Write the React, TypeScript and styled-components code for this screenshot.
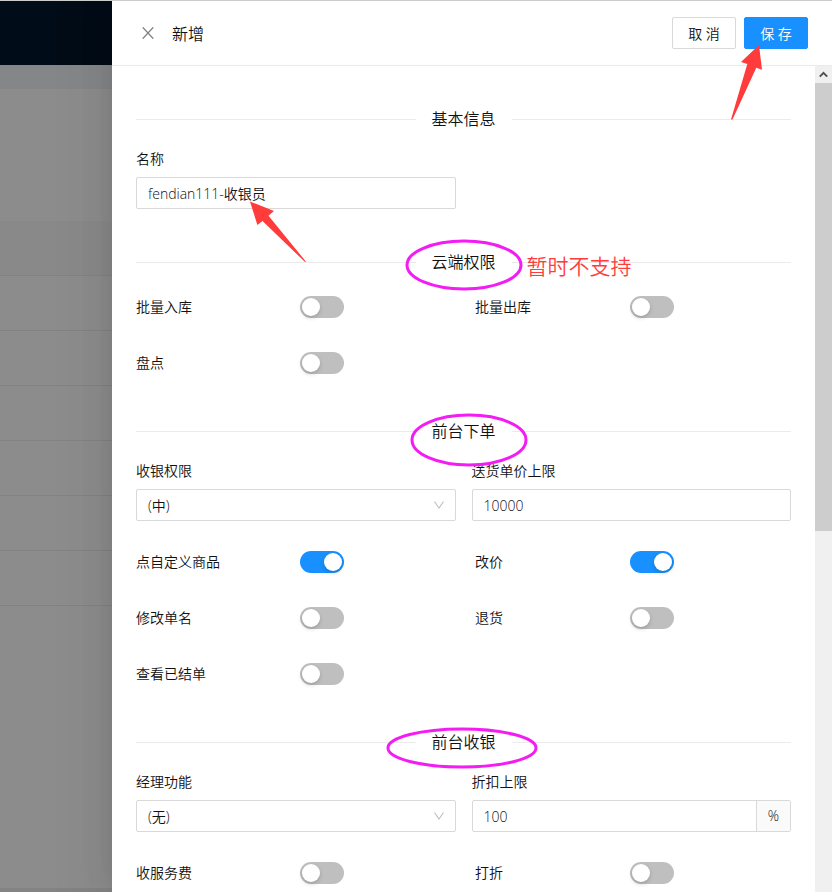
import React, { useId } from "react";
import styled, { createGlobalStyle } from "styled-components";

const GlobalStyle = createGlobalStyle`
  *, *::before, *::after { box-sizing: border-box; }
  body { margin: 0; }
  body, button, input, select {
    font-family: "Open Sans", "Noto Sans CJK SC", sans-serif;
    font-size: 14px;
    font-weight: 350;
    line-height: 22px;
    color: #111111;
  }
`;

const Page = styled.div`
  display: flex;
  height: 100vh;
  border-top: 1px solid #cccccc;
  background: #8c8c8c;
  overflow: hidden;
`;

const Backdrop = styled.div`
  flex: 1;
  display: flex;
  flex-direction: column;
  min-width: 0;
`;

const NavBar = styled.div`
  height: 64px;
  background: #000c17;
`;

const TabStrip = styled.div`
  height: 24px;
  background: #848688;
`;

const FilterArea = styled.div`
  height: 132px;
`;

const TableRow = styled.div<{ $head?: boolean }>`
  height: 55px;
  border-bottom: 1px solid #828282;
  background: ${(p) => (p.$head ? "#898989" : "transparent")};
`;

const PageFoot = styled.div`
  height: 4px;
  margin-top: auto;
  background: #838383;
`;

const Drawer = styled.section`
  display: flex;
  flex-direction: column;
  width: 720px;
  max-width: 100%;
  background: #ffffff;
  box-shadow:
    -6px 0 16px -8px rgba(0, 0, 0, 0.08),
    -9px 0 28px 0 rgba(0, 0, 0, 0.05),
    -12px 0 48px 16px rgba(0, 0, 0, 0.03);
`;

const Header = styled.header`
  display: flex;
  align-items: center;
  height: 65px;
  flex: none;
  padding: 0 24px;
  border-bottom: 1px solid #ebebeb;
`;

const CloseButton = styled.button`
  display: flex;
  align-items: center;
  justify-content: center;
  width: 24px;
  height: 24px;
  margin-right: 12px;
  padding: 0;
  border: 0;
  background: none;
  cursor: pointer;
`;

const Title = styled.h1`
  flex: 1;
  margin: 0;
  padding-top: 2px;
  font-size: 16px;
  font-weight: 350;
  line-height: 24px;
`;

const Actions = styled.div`
  position: relative;
  display: flex;
  gap: 8px;
`;

const Button = styled.button<{ $primary?: boolean }>`
  width: 64px;
  height: 32px;
  padding: 2px 0 0;
  border: 1px solid ${(p) => (p.$primary ? "#1890ff" : "#d9d9d9")};
  border-radius: 2px;
  background: ${(p) => (p.$primary ? "#1890ff" : "#ffffff")};
  color: ${(p) => (p.$primary ? "#ffffff" : "#111111")};
  cursor: pointer;
`;

const Main = styled.div`
  display: flex;
  flex: 1;
  min-height: 0;
`;

const Body = styled.form`
  flex: 1;
  min-width: 0;
  padding: 41px 24px 24px;
  overflow-y: auto;
  scrollbar-width: none;
`;

const ScrollTrack = styled.div`
  width: 17px;
  background: #f0f0f0;
`;

const ScrollUp = styled.div`
  display: flex;
  align-items: center;
  justify-content: center;
  height: 17px;
`;

const ScrollThumb = styled.div`
  height: 448px;
  background: #cdcdcd;
`;

const Section = styled.section`
  margin-bottom: 28px;
`;

const Divider = styled.div`
  display: flex;
  align-items: center;
  gap: 16px;

  &::before,
  &::after {
    content: "";
    flex: 1;
    height: 1px;
    background: #ebebeb;
  }
`;

const DividerTitle = styled.h2`
  position: relative;
  margin: 0;
  font-size: 16px;
  font-weight: 350;
  line-height: 24px;
`;

const Ring = styled.svg<{ $x: number; $y: number }>`
  position: absolute;
  left: ${(p) => p.$x}px;
  top: ${(p) => p.$y}px;
  z-index: 1;
  overflow: visible;
  pointer-events: none;
`;

const Remark = styled.span`
  position: absolute;
  left: 95px;
  top: 0;
  color: #ff3b3b;
  font-size: 21px;
  line-height: 32px;
  white-space: nowrap;
`;

const Arrow = styled.svg<{ $x: number; $y: number }>`
  position: absolute;
  left: ${(p) => p.$x}px;
  top: ${(p) => p.$y}px;
  z-index: 2;
  pointer-events: none;
`;

const Fields = styled.div`
  display: grid;
  grid-template-columns: 1fr 1fr;
  column-gap: 16px;
  padding: 17px 0 13px;
`;

const Field = styled.div`
  display: flex;
  flex-direction: column;
  gap: 7px;
  min-width: 0;
`;

const FieldLabel = styled.label`
  line-height: 22px;
`;

const Control = styled.div`
  position: relative;
  display: flex;
  height: 32px;
  border: 1px solid #d9d9d9;
  border-radius: 2px;
`;

const TextInput = styled.input`
  flex: 1;
  min-width: 0;
  padding: 2px 11px 0;
  border: 0;
  outline: 0;
  background: none;
`;

const Select = styled.select`
  flex: 1;
  padding: 2px 11px 0;
  border: 0;
  outline: 0;
  background: none;
  appearance: none;
`;

const Chevron = styled.svg`
  position: absolute;
  right: 11px;
  top: 11px;
  pointer-events: none;
`;

const Addon = styled.span`
  display: flex;
  align-items: center;
  justify-content: center;
  width: 34px;
  border-left: 1px solid #d9d9d9;
  background: #fafafa;
`;

const Toggles = styled.div<{ $spaced?: boolean }>`
  display: grid;
  grid-template-columns: 164fr 175fr 155fr 161fr;
  grid-auto-rows: 56px;
  align-items: center;
  margin-top: ${(p) => (p.$spaced ? "5px" : "0")};
`;

const Switch = styled.input`
  appearance: none;
  position: relative;
  width: 44px;
  height: 22px;
  margin: 0;
  border-radius: 11px;
  background: #bfbfbf;
  cursor: pointer;

  &::before {
    content: "";
    position: absolute;
    top: 2px;
    left: 2px;
    width: 18px;
    height: 18px;
    border-radius: 9px;
    background: #ffffff;
    box-shadow: 0 2px 4px rgba(0, 35, 11, 0.2);
  }

  &:checked {
    background: #1890ff;
  }

  &:checked::before {
    left: 24px;
  }
`;

type RingShape = { x: number; y: number; w: number; h: number };

function SectionDivider({ title, ring, remark }: { title: string; ring?: RingShape; remark?: string }) {
  return (
    <Divider>
      <DividerTitle>
        {title}
        {ring && (
          <Ring $x={ring.x} $y={ring.y} width={ring.w} height={ring.h} aria-hidden="true">
            <ellipse
              cx={ring.w / 2}
              cy={ring.h / 2}
              rx={ring.w / 2 - 2}
              ry={ring.h / 2 - 2}
              fill="none"
              stroke="#f31cf3"
              strokeWidth="3"
            />
          </Ring>
        )}
        {remark && <Remark>{remark}</Remark>}
      </DividerTitle>
    </Divider>
  );
}

function TextField({ label, value, suffix, children }: {
  label: string; value: string; suffix?: string; children?: React.ReactNode;
}) {
  const id = useId();
  return (
    <Field>
      <FieldLabel htmlFor={id}>{label}</FieldLabel>
      <Control>
        <TextInput id={id} type="text" defaultValue={value} />
        {suffix && <Addon>{suffix}</Addon>}
        {children}
      </Control>
    </Field>
  );
}

function SelectField({ label, value }: { label: string; value: string }) {
  const id = useId();
  return (
    <Field>
      <FieldLabel htmlFor={id}>{label}</FieldLabel>
      <Control>
        <Select id={id} defaultValue={value}>
          <option>{value}</option>
        </Select>
        <Chevron width="10" height="8" viewBox="0 0 10 8" aria-hidden="true">
          <path d="M0.5 0.5 L5 7 L9.5 0.5" fill="none" stroke="#bfbfbf" strokeWidth="1.1" />
        </Chevron>
      </Control>
    </Field>
  );
}

function Toggle({ label, on = false }: { label: string; on?: boolean }) {
  const id = useId();
  return (
    <>
      <label htmlFor={id}>{label}</label>
      <Switch id={id} type="checkbox" role="switch" defaultChecked={on} />
    </>
  );
}

const tableRows = [1, 2, 3, 4, 5, 6];

export default function App() {
  return (
    <>
      <GlobalStyle />
      <Page>
        <Backdrop>
          <NavBar />
          <TabStrip />
          <FilterArea />
          <TableRow $head />
          {tableRows.map((n) => (
            <TableRow key={n} />
          ))}
          <PageFoot />
        </Backdrop>
        <Drawer aria-label="新增">
          <Header>
            <CloseButton type="button" aria-label="关闭">
              <svg width="12" height="12" viewBox="0 0 12 12" aria-hidden="true">
                <path d="M0.7 0.3 L11.3 11.7 M11.3 0.3 L0.7 11.7" stroke="#808080" strokeWidth="1.3" />
              </svg>
            </CloseButton>
            <Title>新增</Title>
            <Actions>
              <Button type="button">取 消</Button>
              <Button type="submit" form="role-form" $primary>保 存</Button>
              <Arrow $x={59} $y={28} width="32" height="76" viewBox="0 0 32 76" aria-hidden="true">
                <path d="M28 0 L10 17 L16.3 19 L0 74.5 L1.5 74.5 L25.3 22.7 L31 24.7 Z" fill="#ff3b3b" />
              </Arrow>
            </Actions>
          </Header>
          <Main>
            <Body id="role-form" onSubmit={(e) => e.preventDefault()}>
              <Section>
                <SectionDivider title="基本信息" />
                <Fields>
                  <TextField label="名称" value="fendian111-收银员">
                    <Arrow $x={113} $y={23} width="57" height="62" viewBox="0 0 57 62" aria-hidden="true">
                      <path d="M0 0.5 L24 10 L18.5 14.7 L56 60.7 L55 61 L12.5 20 L7.4 24 Z" fill="#ff3b3b" />
                    </Arrow>
                  </TextField>
                </Fields>
              </Section>
              <Section>
                <SectionDivider title="云端权限" ring={{ x: -27, y: -11, w: 118, h: 52 }} remark="暂时不支持" />
                <Toggles $spaced>
                  <Toggle label="批量入库" />
                  <Toggle label="批量出库" />
                  <Toggle label="盘点" />
                </Toggles>
              </Section>
              <Section>
                <SectionDivider title="前台下单" ring={{ x: -22, y: -6, w: 118, h: 54 }} />
                <Fields>
                  <SelectField label="收银权限" value="(中)" />
                  <TextField label="送货单价上限" value="10000" />
                </Fields>
                <Toggles>
                  <Toggle label="点自定义商品" on />
                  <Toggle label="改价" on />
                  <Toggle label="修改单名" />
                  <Toggle label="退货" />
                  <Toggle label="查看已结单" />
                </Toggles>
              </Section>
              <Section>
                <SectionDivider title="前台收银" ring={{ x: -46, y: -3, w: 152, h: 42 }} />
                <Fields>
                  <SelectField label="经理功能" value="(无)" />
                  <TextField label="折扣上限" value="100" suffix="%" />
                </Fields>
                <Toggles>
                  <Toggle label="收服务费" />
                  <Toggle label="打折" />
                </Toggles>
              </Section>
            </Body>
            <ScrollTrack aria-hidden="true">
              <ScrollUp>
                <svg width="9" height="7" viewBox="0 0 9 7">
                  <path d="M0.8 5.6 L4.5 1.9 L8.2 5.6" fill="none" stroke="#505050" strokeWidth="2" />
                </svg>
              </ScrollUp>
              <ScrollThumb />
            </ScrollTrack>
          </Main>
        </Drawer>
      </Page>
    </>
  );
}
